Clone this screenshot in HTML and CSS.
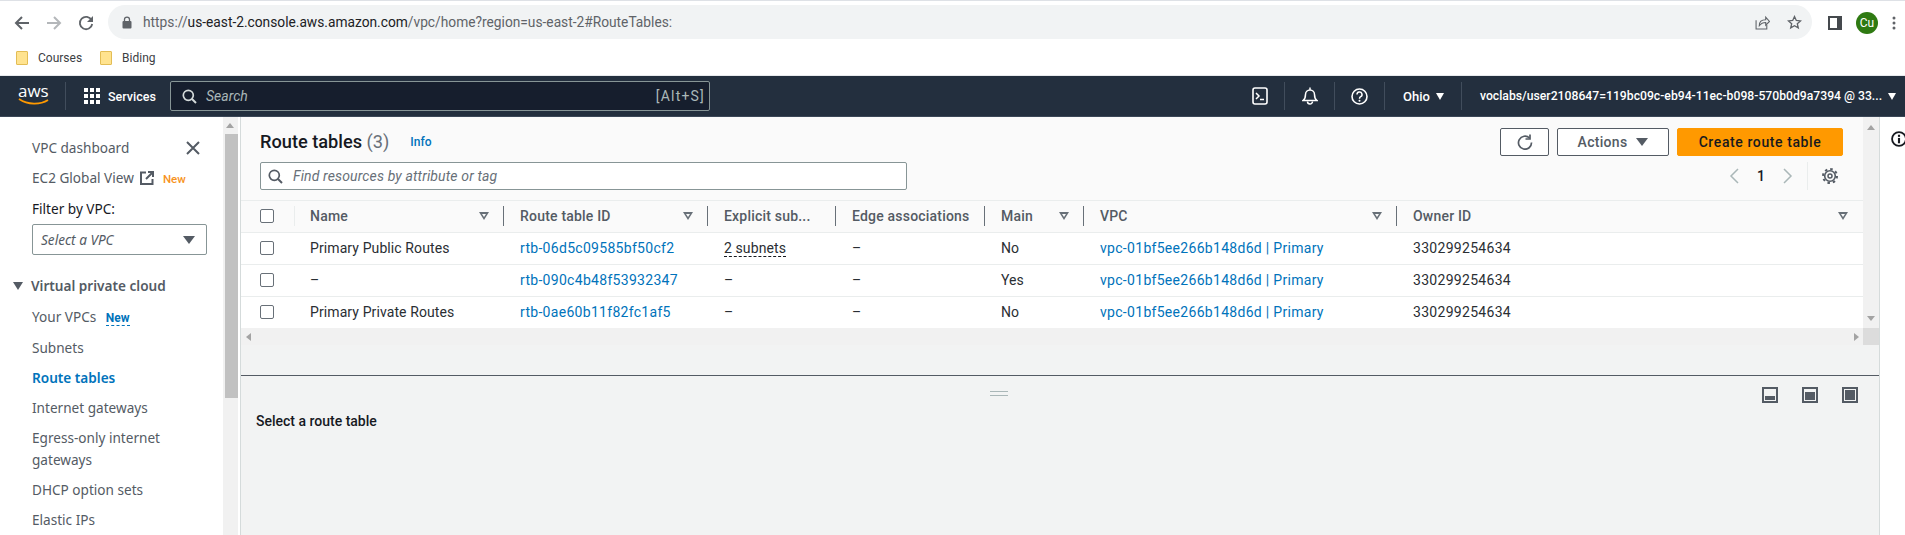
FILE: index.html
```html
<!DOCTYPE html>
<html lang="en">
<head>
    <meta charset="UTF-8">
    <title>Route tables | VPC Console</title>
    <link rel="stylesheet" href="styles.css">
</head>
<body>
    <div class="browser-bar">
        <div class="browser-nav">
            <svg class="ico-back" width="16" height="16" viewBox="0 0 16 16"><path d="M15 8H2M8 2 2 8l6 6" fill="none" stroke="#5f6368" stroke-width="2"/></svg>
            <svg class="ico-fwd" width="16" height="16" viewBox="0 0 16 16"><path d="M1 8h13M8 2l6 6-6 6" fill="none" stroke="#b4b7ba" stroke-width="2"/></svg>
            <svg class="ico-reload" width="16" height="16" viewBox="0 0 16 16"><path d="M13.6 5.2A6.2 6.2 0 1 0 14.2 9" fill="none" stroke="#5f6368" stroke-width="1.8"/><path d="M15 1v6H9z" fill="#5f6368"/></svg>
        </div>
        <div class="url-bar">
            <svg class="ico-lock" width="10" height="13" viewBox="0 0 10 13"><path d="M2.5 5.5V3.6a2.5 2.5 0 0 1 5 0v1.9" fill="none" stroke="#5f6368" stroke-width="1.3"/><rect x="0.5" y="5" width="9" height="7.5" rx="1" fill="#5f6368"/></svg>
            <span class="url-text"><span class="url-dim">https://</span>us-east-2.console.aws.amazon.com<span class="url-dim">/vpc/home?region=us-east-2#RouteTables:</span></span>
            <svg class="ico-share" width="15" height="15" viewBox="0 0 14 14"><path d="M1 5v8h10V9" fill="none" stroke="#5f6368"/><path d="M4 10c0-4 3-5.5 6-5.5V2l3.5 4L10 9.5V7C7.5 7 5.5 8 4 10z" fill="none" stroke="#5f6368"/></svg>
            <svg class="ico-star" width="15" height="15" viewBox="0 0 15 15"><path d="M7.5 1.5l1.8 4 4.2.4-3.2 2.8 1 4.2-3.800-2.200-3.800 2.200 1-4.200L1.500 5.900l4.200-.4z" fill="none" stroke="#5f6368" stroke-width="1.3"/></svg>
        </div>
        <div class="browser-tools">
            <svg width="14" height="14" viewBox="0 0 14 14"><rect x="1" y="1" width="12" height="12" fill="none" stroke="#45494d" stroke-width="2"/><rect x="9" y="1" width="4" height="12" fill="#45494d"/></svg>
            <span class="avatar">Cu</span>
            <svg width="4" height="14" viewBox="0 0 4 14"><circle cx="2" cy="2" r="1.5" fill="#5f6368"/><circle cx="2" cy="7" r="1.5" fill="#5f6368"/><circle cx="2" cy="12" r="1.5" fill="#5f6368"/></svg>
        </div>
    </div>

    <div class="bookmarks">
        <span class="bookmark"><span class="folder"></span>Courses</span>
        <span class="bookmark"><span class="folder"></span>Biding</span>
    </div>

    <nav class="topnav">
        <div class="aws-logo">
            <span>aws</span>
            <svg width="32" height="7" viewBox="0 0 32 7"><path d="M1 1c9 6 21 6 29 1" fill="none" stroke="#f90" stroke-width="1.8"/></svg>
        </div>
        <div class="services">
            <svg width="16" height="16" viewBox="0 0 16 16" fill="#fff"><rect width="4" height="4"/><rect x="6" width="4" height="4"/><rect x="12" width="4" height="4"/><rect y="6" width="4" height="4"/><rect x="6" y="6" width="4" height="4"/><rect x="12" y="6" width="4" height="4"/><rect y="12" width="4" height="4"/><rect x="6" y="12" width="4" height="4"/><rect x="12" y="12" width="4" height="4"/></svg>
            <span>Services</span>
        </div>
        <div class="nav-search">
            <svg width="15" height="15" viewBox="0 0 15 15"><circle cx="6.3" cy="6.3" r="5" fill="none" stroke="#d5dbdb" stroke-width="1.7"/><path d="M10 10l4 4" stroke="#d5dbdb" stroke-width="2"/></svg>
            <em>Search</em>
            <span class="shortcut">[Alt+S]</span>
        </div>
        <div class="nav-right">
            <div class="nav-item icon-item"><svg width="16" height="18" viewBox="0 0 16 18"><rect x="1" y="1" width="14" height="16" rx="2" fill="none" stroke="#fff" stroke-width="1.6"/><path d="M4 6l3 3-3 3M8 12.5h4" fill="none" stroke="#fff" stroke-width="1.5"/></svg></div>
            <div class="nav-item icon-item"><svg width="16" height="18" viewBox="0 0 16 18"><path d="M8 .5V3M1 13.5c2-1.5 2.5-3 2.5-6a4.500 4.500 0 0 1 9 0c0 3 .5 4.500 2.500 6z" fill="none" stroke="#fff" stroke-width="1.5"/><path d="M5.5 14.5a2.500 2.500 0 0 0 5 0" fill="none" stroke="#fff" stroke-width="1.5"/></svg></div>
            <div class="nav-item icon-item"><svg width="17" height="17" viewBox="0 0 17 17"><circle cx="8.5" cy="8.5" r="7.5" fill="none" stroke="#fff" stroke-width="1.6"/><path d="M6 6.5a2.500 2.500 0 1 1 3.700 2.200c-.9.500-1.200 1-1.200 2" fill="none" stroke="#fff" stroke-width="1.5"/><circle cx="8.5" cy="12.8" r="1" fill="#fff"/></svg></div>
            <div class="nav-item region">Ohio <i class="caret-white"></i></div>
            <div class="nav-item account">voclabs/user2108647=119bc09c-eb94-11ec-b098-570b0d9a7394 @ 33... <i class="caret-white"></i></div>
        </div>
    </nav>

    <div class="main">
        <aside class="sidebar">
            <div class="side-close">
                <a class="side-link">VPC dashboard</a>
                <svg width="14" height="14" viewBox="0 0 14 14"><path d="M1 1l12 12M13 1 1 13" stroke="#545b64" stroke-width="2"/></svg>
            </div>
            <a class="side-link">EC2 Global View
                <svg class="ext" width="14" height="14" viewBox="0 0 14 14"><path d="M6 1.500H1v11.500h11.500V8" fill="none" stroke="#545b64" stroke-width="2"/><path d="M8 1h5v5M13 1 6 8" fill="none" stroke="#545b64" stroke-width="2"/></svg>
                <span class="new-orange">New</span></a>
            <div class="side-label">Filter by VPC:</div>
            <div class="vpc-select"><em>Select a VPC</em><i class="caret"></i></div>
            <div class="side-heading"><i class="caret"></i>Virtual private cloud</div>
            <a class="side-link">Your VPCs <span class="new-blue">New</span></a>
            <a class="side-link">Subnets</a>
            <a class="side-link active">Route tables</a>
            <a class="side-link">Internet gateways</a>
            <a class="side-link">Egress-only internet gateways</a>
            <a class="side-link">DHCP option sets</a>
            <a class="side-link">Elastic IPs</a>
        </aside>
        <div class="side-scroll">
            <span class="arrow-up"></span>
            <div class="thumb"></div>
        </div>

        <div class="content">
            <div class="top-pane">
                <div class="pane-main">
                    <header class="pane-head">
                        <div class="head-left">
                            <div class="title-row">
                                <h1>Route tables <span class="count">(3)</span></h1>
                                <a class="info">Info</a>
                            </div>
                            <div class="filter">
                                <svg width="15" height="15" viewBox="0 0 15 15"><circle cx="6.3" cy="6.3" r="5" fill="none" stroke="#545b64" stroke-width="1.7"/><path d="M10 10l4 4" stroke="#545b64" stroke-width="2"/></svg>
                                <em>Find resources by attribute or tag</em>
                            </div>
                        </div>
                        <div class="head-right">
                            <div class="actions">
                                <button class="btn btn-icon"><svg width="16" height="16" viewBox="0 0 16 16"><path d="M12.5 4A6.500 6.500 0 1 0 14.500 8.500" fill="none" stroke="#545b64" stroke-width="1.7"/><path d="M13 .5V5H8.500" fill="none" stroke="#545b64" stroke-width="1.7"/></svg></button>
                                <button class="btn btn-actions">Actions <i class="caret"></i></button>
                                <button class="btn btn-primary">Create route table</button>
                            </div>
                            <div class="pager">
                                <svg width="10" height="16" viewBox="0 0 10 16"><path d="M9 1 2 8l7 7" fill="none" stroke="#aab7b8" stroke-width="1.5"/></svg>
                                <span>1</span>
                                <svg width="10" height="16" viewBox="0 0 10 16"><path d="M1 1l7 7-7 7" fill="none" stroke="#aab7b8" stroke-width="1.5"/></svg>
                                <span class="pager-sep"></span>
                                <svg width="16" height="16" viewBox="0 0 16 16" fill="none" stroke="#545b64"><circle cx="8" cy="8" r="7" stroke-width="2" stroke-dasharray="2.5 3"/><circle cx="8" cy="8" r="5.3" stroke-width="1.6"/><circle cx="8" cy="8" r="2" stroke-width="1.5"/></svg>
                            </div>
                        </div>
                    </header>

                    <table class="rt-table">
                        <colgroup>
                            <col class="c-check"><col class="c-name"><col class="c-id"><col class="c-sub"><col class="c-edge"><col class="c-main"><col class="c-vpc"><col>
                        </colgroup>
                        <thead>
                            <tr>
                                <th class="check"><span class="cb"></span></th>
                                <th><span class="th-in">Name<i class="sort"></i></span></th>
                                <th><span class="th-in">Route table ID<i class="sort"></i></span></th>
                                <th><span class="th-in">Explicit sub...</span></th>
                                <th><span class="th-in">Edge associations</span></th>
                                <th><span class="th-in">Main<i class="sort"></i></span></th>
                                <th><span class="th-in">VPC<i class="sort"></i></span></th>
                                <th class="last"><span class="th-in">Owner ID<i class="sort"></i></span></th>
                            </tr>
                        </thead>
                        <tbody>
                            <tr>
                                <td class="check"><span class="cb"></span></td>
                                <td>Primary Public Routes</td>
                                <td><a>rtb-06d5c09585bf50cf2</a></td>
                                <td><span class="dotted">2 subnets</span></td>
                                <td>–</td>
                                <td>No</td>
                                <td><a>vpc-01bf5ee266b148d6d | Primary</a></td>
                                <td class="owner">330299254634</td>
                            </tr>
                            <tr>
                                <td class="check"><span class="cb"></span></td>
                                <td>–</td>
                                <td><a>rtb-090c4b48f53932347</a></td>
                                <td>–</td>
                                <td>–</td>
                                <td>Yes</td>
                                <td><a>vpc-01bf5ee266b148d6d | Primary</a></td>
                                <td class="owner">330299254634</td>
                            </tr>
                            <tr>
                                <td class="check"><span class="cb"></span></td>
                                <td>Primary Private Routes</td>
                                <td><a>rtb-0ae60b11f82fc1af5</a></td>
                                <td>–</td>
                                <td>–</td>
                                <td>No</td>
                                <td><a>vpc-01bf5ee266b148d6d | Primary</a></td>
                                <td class="owner">330299254634</td>
                            </tr>
                        </tbody>
                    </table>
                    <div class="h-scroll"><span class="arrow-left"></span><span class="arrow-right"></span></div>
                </div>
                <div class="v-scroll">
                    <span class="arrow-up"></span>
                    <span class="arrow-down"></span>
                    <span class="corner"></span>
                </div>
            </div>
            <div class="pane-gap"></div>
            <div class="bottom-pane">
                <div class="handle"></div>
                <div class="view-icons">
                    <span class="view-ico low"></span>
                    <span class="view-ico mid"></span>
                    <span class="view-ico full"></span>
                </div>
                <h2>Select a route table</h2>
            </div>
        </div>

        <div class="tools">
            <svg width="16" height="16" viewBox="0 0 15 15"><circle cx="7.5" cy="7.5" r="6.5" fill="none" stroke="#16191f" stroke-width="1.7"/><rect x="6.5" y="6.5" width="2" height="5" fill="#16191f"/><rect x="6.5" y="3.5" width="2" height="2" fill="#16191f"/></svg>
        </div>
    </div>
</body>
</html>
```

FILE: styles.css
```css
* {
    box-sizing: border-box;
}
html, body {
    height: 100%;
}
body {
    margin: 0;
    height: 535px;
    overflow: hidden;
    background: #fff;
    color: #16191f;
    font-family: Roboto, "Noto Sans", sans-serif;
    font-size: 14px;
}
a {
    color: #0073bb;
}
em {
    font-style: italic;
}

/* browser chrome */
.browser-bar {
    height: 40px;
    padding-top: 5px;
    border-top: 1px solid #dee1e6;
    display: flex;
}
.browser-nav {
    width: 108px;
    padding-left: 14px;
    display: flex;
    align-items: center;
    gap: 16px;
    height: 34px;
}
.url-bar {
    width: 1704px;
    height: 34px;
    margin-top: -1px;
    background: #f1f3f4;
    border-radius: 17px;
    display: flex;
    align-items: center;
    padding-left: 14px;
    padding-right: 10px;
}
.url-text {
    margin-left: 11px;
    flex: 1;
    color: #202124;
    font-size: 13.75px;
}
.url-dim {
    color: #5f6368;
}
.ico-star {
    margin-left: 17px;
}
.browser-tools {
    flex: 1;
    display: flex;
    align-items: center;
    height: 34px;
    padding-left: 16px;
    gap: 14px;
}
.avatar {
    width: 22px;
    height: 22px;
    border-radius: 50%;
    background: #2f7a12;
    color: #fff;
    font-size: 12px;
    display: flex;
    align-items: center;
    justify-content: center;
}
.bookmarks {
    height: 36px;
    display: flex;
    align-items: center;
    padding-left: 16px;
    gap: 18px;
    font-size: 12px;
    color: #3c4043;
    border-bottom: 1px solid #e8eaed;
}
.bookmark {
    display: flex;
    align-items: center;
    gap: 10px;
}
.folder {
    width: 12px;
    height: 14px;
    background: #ffe38f;
    border: 1px solid #e3bd55;
    border-radius: 1px;
}

/* console nav */
.topnav {
    height: 41px;
    background: #232f3e;
    color: #fff;
    display: flex;
    align-items: center;
    border-bottom: 1px solid #3b4757;
}
.aws-logo {
    width: 66px;
    height: 28px;
    padding-left: 18px;
    border-right: 1px solid #414d5c;
    color: #fff;
    font-family: "Open Sans", sans-serif;
    font-size: 17px;
    line-height: 16px;
}
.aws-logo span {
    display: block;
    margin-top: 1px;
}
.aws-logo svg {
    display: block;
    margin-top: -1px;
}
.services {
    width: 104px;
    padding-left: 18px;
    display: flex;
    align-items: center;
    gap: 8px;
    font-weight: 500;
    font-size: 12.5px;
}
.nav-search {
    width: 540px;
    height: 30px;
    background: #161e2d;
    border: 1px solid #879596;
    border-radius: 2px;
    display: flex;
    align-items: center;
    padding: 0 4px 0 11px;
    color: #aab7b8;
    font-size: 14px;
}
.nav-search em {
    margin-left: 9px;
    flex: 1;
}
.shortcut {
    letter-spacing: 1.2px;
}
.nav-right {
    margin-left: auto;
    display: flex;
    align-items: center;
    height: 28px;
}
.nav-item {
    height: 28px;
    display: flex;
    align-items: center;
    font-size: 13px;
    font-weight: 500;
    border-right: 1px solid #414d5c;
}
.icon-item {
    width: 50px;
    justify-content: center;
}
.region {
    width: 77px;
    padding-left: 18px;
    gap: 6px;
}
.account {
    width: 443px;
    padding-left: 18px;
    border-right: 0;
    font-size: 12.2px;
    white-space: nowrap;
}
.account .caret-white {
    margin-left: 6px;
}
.caret-white {
    width: 0;
    height: 0;
    border-left: 4px solid transparent;
    border-right: 4px solid transparent;
    border-top: 7px solid #fff;
}
.caret {
    display: inline-block;
    width: 0;
    height: 0;
    border-left: 6px solid transparent;
    border-right: 6px solid transparent;
    border-top: 8px solid #545b64;
}

/* layout under the nav */
.main {
    display: flex;
    height: 418px;
    overflow: hidden;
}
.sidebar {
    width: 223px;
    flex: none;
    padding: 20px 16px 0 32px;
    background: #fff;
    color: #545b64;
    line-height: 22px;
    font-family: "Noto Sans", sans-serif;
    font-size: 13.6px;
}
.side-close {
    display: flex;
    justify-content: space-between;
    align-items: center;
    margin-bottom: 8px;
    padding-right: 7px;
}
.side-close .side-link {
    margin-bottom: 0;
}
.side-link {
    display: block;
    color: #545b64;
    margin-bottom: 8px;
}
.side-link.active {
    color: #0073bb;
    font-weight: 600;
}
.ext {
    vertical-align: -2px;
    margin-left: 3px;
}
.new-orange {
    color: #f7931e;
    font-family: Roboto, sans-serif;
    font-size: 11.5px;
    font-weight: 500;
    margin-left: 5px;
}
.new-blue {
    color: #0073bb;
    font-family: Roboto, sans-serif;
    font-size: 12px;
    font-weight: 700;
    margin-left: 6px;
    border-bottom: 1px dashed #0073bb;
}
.side-label {
    color: #16191f;
    margin-bottom: 4px;
}
.vpc-select {
    width: 175px;
    height: 31px;
    border: 1px solid #879596;
    border-radius: 2px;
    display: flex;
    align-items: center;
    justify-content: space-between;
    padding: 0 11px 0 8px;
    margin-bottom: 20px;
}
.side-heading {
    margin: 0 0 9px -19px;
    font-weight: 600;
    display: flex;
    align-items: center;
    gap: 8px;
}
.side-heading .caret {
    border-left-width: 5px;
    border-right-width: 5px;
}
.side-scroll {
    width: 15px;
    flex: none;
    background: #f1f1f1;
    padding-top: 17px;
    position: relative;
}
.side-scroll .arrow-up {
    left: 3px;
    top: 6px;
}
.thumb {
    height: 264px;
    margin-left: 2px;
    background: #c1c1c1;
}
.arrow-up, .arrow-down, .arrow-left, .arrow-right {
    position: absolute;
    width: 0;
    height: 0;
    border: 4px solid transparent;
}
.arrow-up {
    border-bottom: 5px solid #a3a3a3;
    border-top: 0;
}
.arrow-down {
    border-top: 5px solid #a3a3a3;
    border-bottom: 0;
}
.arrow-left {
    border-right: 5px solid #a3a3a3;
    border-left: 0;
}
.arrow-right {
    border-left: 5px solid #a3a3a3;
    border-right: 0;
}

/* route table pane */
.content {
    flex: 1;
    min-width: 0;
    margin-left: 2px;
    border-left: 1px solid #d5dbdb;
    background: #f2f3f3;
    display: flex;
    flex-direction: column;
}
.top-pane {
    height: 228px;
    display: flex;
}
.pane-main {
    flex: 1;
    min-width: 0;
    display: flex;
    flex-direction: column;
}
.pane-head {
    height: 83px;
    background: #fafafa;
    display: flex;
    justify-content: space-between;
    padding: 11px 20px 0 19px;
}
.title-row {
    display: flex;
    align-items: center;
    gap: 21px;
    height: 26px;
}
h1 {
    margin: 0;
    font-size: 18.2px;
    font-weight: 500;
    color: #16191f;
}
.count {
    color: #687078;
    font-weight: 400;
}
.info {
    font-size: 12px;
    font-weight: 500;
    padding-top: 2px;
}
.filter {
    width: 647px;
    height: 28px;
    margin-top: 8px;
    background: #fff;
    border: 1px solid #879596;
    border-radius: 2px;
    display: flex;
    align-items: center;
    padding-left: 7px;
    gap: 10px;
    color: #687078;
    letter-spacing: 0.14px;
}
.actions {
    display: flex;
    gap: 8px;
}
.btn {
    height: 28px;
    border: 1px solid #545b64;
    border-radius: 2px;
    background: #fff;
    color: #545b64;
    font-family: inherit;
    font-size: 14px;
    font-weight: 500;
    letter-spacing: 0.6px;
    display: flex;
    align-items: center;
    justify-content: center;
    padding: 0;
}
.btn-icon {
    width: 49px;
}
.btn-actions {
    width: 112px;
    gap: 9px;
    letter-spacing: 0.3px;
}
.btn-primary {
    width: 166px;
    background: #ff9900;
    border-color: #ff9900;
    color: #16191f;
}
.pager {
    height: 28px;
    margin-top: 6px;
    display: flex;
    align-items: center;
    justify-content: flex-end;
    padding-right: 5px;
}
.pager span:not(.pager-sep) {
    width: 44px;
    text-align: center;
    font-weight: 500;
}
.pager-sep {
    width: 1px;
    height: 28px;
    background: #eaeded;
    margin: 0 14px;
}
.rt-table {
    width: 100%;
    border-collapse: collapse;
    table-layout: fixed;
    background: #fff;
}
.c-check { width: 53px; }
.c-name { width: 209px; }
.c-id { width: 204px; }
.c-sub { width: 128px; }
.c-edge { width: 149px; }
.c-main { width: 99px; }
.c-vpc { width: 313px; }
.rt-table th {
    height: 32px;
    padding: 0;
    background: #fafafa;
    border-top: 1px solid #eaeded;
    border-bottom: 1px solid #eaeded;
    text-align: left;
    font-weight: 500;
    color: #545b64;
    letter-spacing: 0.2px;
}
.th-in {
    height: 20px;
    display: flex;
    align-items: center;
    justify-content: space-between;
    padding: 0 14px 0 16px;
    border-left: 1px solid #687078;
}
.rt-table th:nth-child(2) .th-in {
    border-left-color: #eaeded;
    padding-left: 15px;
}
.rt-table th.last .th-in {
    padding-right: 15px;
}
.sort {
    position: relative;
    width: 0;
    height: 0;
    border-left: 5px solid transparent;
    border-right: 5px solid transparent;
    border-top: 8px solid #687078;
}
.sort::after {
    content: "";
    position: absolute;
    left: -2px;
    top: -6px;
    width: 0;
    height: 0;
    border-left: 2px solid transparent;
    border-right: 2px solid transparent;
    border-top: 3px solid #fafafa;
}
.rt-table td {
    height: 32px;
    padding: 0 0 0 17px;
    border-bottom: 1px solid #eaeded;
    white-space: nowrap;
    color: #2a2e33;
    letter-spacing: 0.1px;
}
.rt-table td:nth-child(2) {
    padding-left: 16px;
}
.rt-table td a {
    letter-spacing: 0.3px;
}
.rt-table td.owner {
    letter-spacing: 0.3px;
}
.rt-table tr:last-child td {
    border-bottom: 0;
}
.rt-table td.check, .rt-table th.check {
    padding-left: 19px;
}
.cb {
    display: block;
    width: 14px;
    height: 14px;
    background: #fff;
    border: 1px solid #687078;
    border-radius: 2px;
}
.dotted {
    border-bottom: 1px dashed #16191f;
}
.h-scroll {
    height: 17px;
    background: #f1f1f1;
    position: relative;
}
.arrow-left {
    left: 5px;
    top: 5px;
}
.arrow-right {
    right: 4px;
    top: 5px;
}
.v-scroll {
    width: 16px;
    flex: none;
    background: #f1f1f1;
    position: relative;
}
.v-scroll .arrow-up {
    left: 4px;
    top: 8px;
}
.v-scroll .arrow-down {
    left: 4px;
    bottom: 24px;
}
.corner {
    position: absolute;
    left: 0;
    bottom: 0;
    width: 16px;
    height: 17px;
    background: #dcdcdc;
}
.pane-gap {
    height: 30px;
}
.bottom-pane {
    flex: 1;
    position: relative;
    border-top: 1px solid #545b64;
    padding: 11px 21px 0 15px;
}
.handle {
    position: absolute;
    left: 749px;
    top: 15px;
    width: 18px;
    height: 5px;
    border-top: 1px solid #aab7b8;
    border-bottom: 1px solid #aab7b8;
}
.view-icons {
    display: flex;
    justify-content: flex-end;
    gap: 24px;
}
.view-ico {
    width: 16px;
    height: 16px;
    border: 2px solid #545b64;
    background: #f2f3f3;
    position: relative;
}
.view-ico::after {
    content: "";
    position: absolute;
    left: 1px;
    right: 1px;
    bottom: 1px;
    background: #545b64;
}
.low::after { height: 4px; }
.mid::after { height: 8px; }
.full::after { height: 10px; }
.bottom-pane h2 {
    margin: 10px 0 0;
    font-size: 14px;
    font-weight: 500;
    color: #16191f;
}
.tools {
    width: 26px;
    flex: none;
    border-left: 1px solid #d5dbdb;
    background: #fff;
    overflow: hidden;
    padding: 14px 0 0 11px;
}
.tools svg {
    display: block;
}
```
